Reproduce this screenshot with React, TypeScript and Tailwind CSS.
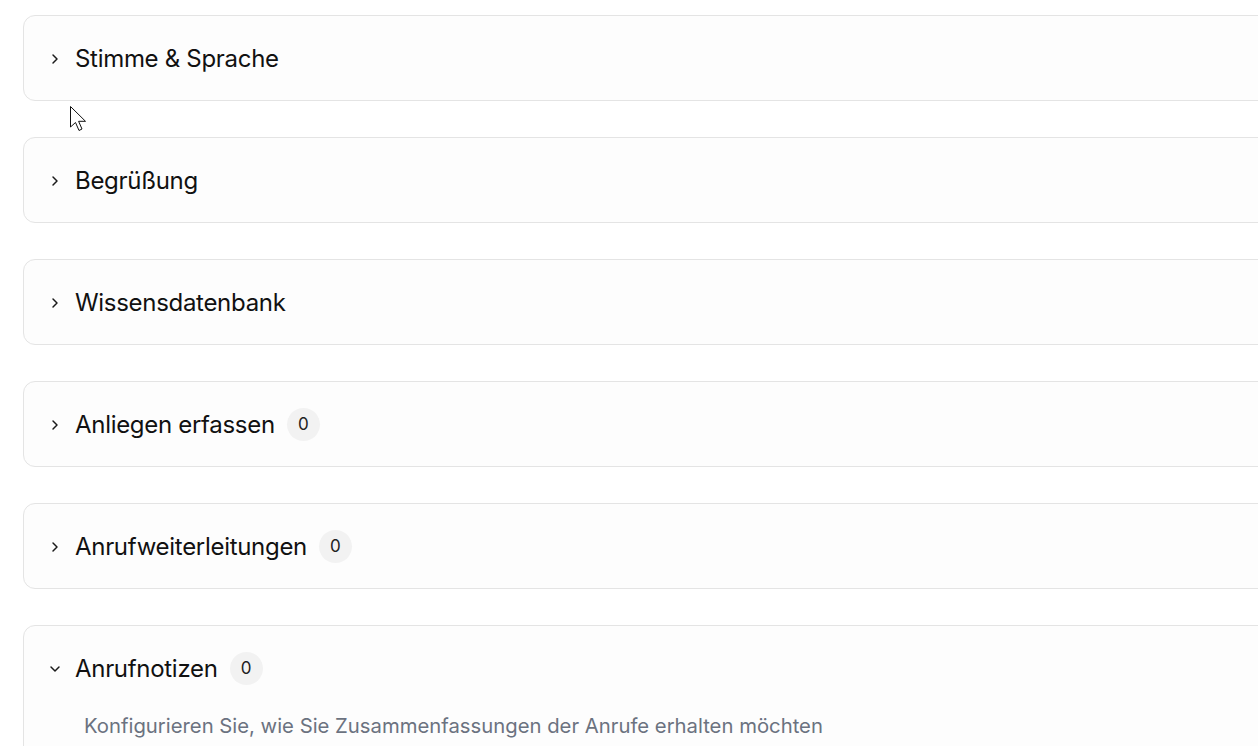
import { ChevronRight, ChevronDown } from "lucide-react";

type Section = { title: string; count?: number; open?: boolean };

const sections: Section[] = [
  { title: "Stimme & Sprache" },
  { title: "Begrüßung" },
  { title: "Wissensdatenbank" },
  { title: "Anliegen erfassen", count: 0 },
  { title: "Anrufweiterleitungen", count: 0 },
  { title: "Anrufnotizen", count: 0, open: true },
];

function Cursor() {
  return (
    <svg
      className="absolute left-[69px] top-[105px]"
      width="22"
      height="30"
      viewBox="0 0 22 30"
    >
      <path
        d="M1.5 1.5 L1.5 22 L6.5 17.5 L10 25.5 L13 24 L9.6 16.3 L16.5 16.3 Z"
        fill="#fff"
        stroke="#111"
        strokeWidth="1"
        strokeLinejoin="round"
      />
    </svg>
  );
}

export default function App() {
  return (
    <div
      className="relative w-full h-[746px] overflow-hidden bg-white"
      style={{ fontFamily: "Inter, 'Noto Sans', sans-serif" }}
    >
      <div className="pl-[23px] pt-[15px] w-[1320px] flex flex-col gap-[36px]">
        {sections.map((s) => (
          <div
            key={s.title}
            className="rounded-xl border border-[#e4e4e4] bg-[#fdfdfd]"
          >
            <div className="h-[84px] flex items-center pl-[23px] pt-[1px]">
              {s.open ? (
                <ChevronDown className="w-4 h-4 text-[#1a1a1a]" strokeWidth={2.2} />
              ) : (
                <ChevronRight className="w-4 h-4 text-[#1a1a1a]" strokeWidth={2.2} />
              )}
              <span className="ml-[12px] text-[24px] text-[#111] tracking-[-0.3px]">
                {s.title}
              </span>
              {s.count !== undefined && (
                <span className="ml-[12px] w-[33px] h-[33px] rounded-full bg-[#f2f2f2] flex items-center justify-center text-[17px] text-[#222]">
                  {s.count}
                </span>
              )}
            </div>
            {s.open && (
              <div className="pl-[60px] pb-6 mt-[1px]">
                <p className="text-[20.3px] text-[#6b7280]">
                  Konfigurieren Sie, wie Sie Zusammenfassungen der Anrufe erhalten möchten
                </p>
              </div>
            )}
          </div>
        ))}
      </div>
      <Cursor />
    </div>
  );
}
